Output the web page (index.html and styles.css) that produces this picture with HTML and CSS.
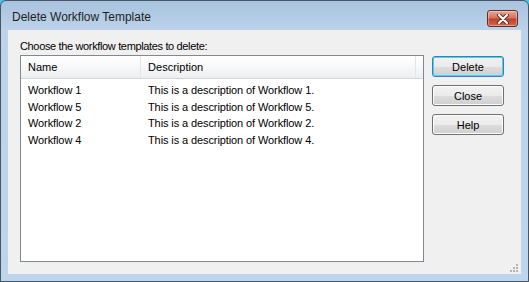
FILE: index.html
```html
<!DOCTYPE html>
<html lang="en">
<head>
    <meta charset="UTF-8">
    <title>Delete Workflow Template</title>
    <link rel="stylesheet" href="styles.css">
</head>
<body>
    <div class="window">
        <div class="titlebar">
            <span class="title">Delete Workflow Template</span>
            <button class="close-x">
                <svg width="16" height="10" viewBox="0 0 16 10">
                    <path d="M4 1 L12 9 M12 1 L4 9" stroke="#5a2a22" stroke-width="4" stroke-linecap="round"/>
                    <path d="M4 1 L12 9 M12 1 L4 9" stroke="#ffffff" stroke-width="2.2" stroke-linecap="round"/>
                </svg>
            </button>
        </div>
        <div class="client">
            <div class="prompt">Choose the workflow templates to delete:</div>
            <div class="content">
                <div class="listview">
                    <div class="header">
                        <div class="col col-name">Name</div>
                        <div class="col col-desc">Description</div>
                        <div class="col col-rest"></div>
                    </div>
                    <div class="row"><span class="cell-name">Workflow 1</span><span>This is a description of Workflow 1.</span></div>
                    <div class="row"><span class="cell-name">Workflow 5</span><span>This is a description of Workflow 5.</span></div>
                    <div class="row"><span class="cell-name">Workflow 2</span><span>This is a description of Workflow 2.</span></div>
                    <div class="row"><span class="cell-name">Workflow 4</span><span>This is a description of Workflow 4.</span></div>
                </div>
                <div class="buttons">
                    <button class="button default">Delete</button>
                    <button class="button">Close</button>
                    <button class="button">Help</button>
                </div>
            </div>
            <div class="grip">
                <svg width="8" height="8" viewBox="0 0 8 8" fill="#b4b4b4">
                    <rect x="6" y="0" width="2" height="2"/>
                    <rect x="3" y="3" width="2" height="2"/>
                    <rect x="6" y="3" width="2" height="2"/>
                    <rect x="0" y="6" width="2" height="2"/>
                    <rect x="3" y="6" width="2" height="2"/>
                    <rect x="6" y="6" width="2" height="2"/>
                </svg>
            </div>
        </div>
    </div>
</body>
</html>
```

FILE: styles.css
```css
body {
    margin: 0;
    background-color: #3ec8ec;
    font-family: "Liberation Sans", Arial, sans-serif;
    font-size: 11px;
    color: #000;
}
.window {
    width: 527px;
    height: 280px;
    border: 1px solid #4a5564;
    border-radius: 6px 6px 0 0;
    background: linear-gradient(#a9c3de, #bcd3ea 30px, #bfd5eb);
    display: flex;
    flex-direction: column;
}
.titlebar {
    height: 29px;
    display: flex;
    align-items: flex-start;
    justify-content: space-between;
    padding: 0 10px 0 11px;
}
.title {
    font-size: 12px;
    margin-top: 9px;
    color: #1e1e1e;
}
.close-x {
    width: 31px;
    height: 17px;
    margin-top: 9px;
    padding: 0;
    border: 1px solid #6b2a22;
    border-radius: 3px;
    background: linear-gradient(#e8a898, #d5735f 45%, #c0412a 55%, #cf6a4c);
    box-shadow: inset 0 0 0 1px rgba(255,255,255,0.35);
    display: flex;
    align-items: center;
    justify-content: center;
}
.client {
    flex: 1;
    margin: 0 7px 7px 7px;
    background-color: #f0f0f0;
    padding: 10px 17px 0 12px;
    position: relative;
}
.prompt {
    height: 15px;
    letter-spacing: -0.35px;
}
.content {
    display: flex;
    gap: 8px;
}
.listview {
    width: 402px;
    height: 205px;
    border: 1px solid #828790;
    background-color: #fff;
}
.header {
    display: flex;
    height: 22px;
    background: linear-gradient(#ffffff, #f7f8f9 50%, #eceef0);
    border-bottom: 1px solid #d5d5d5;
    margin-bottom: 3px;
}
.col {
    line-height: 22px;
    padding-left: 7px;
    border-right: 1px solid #e3e5e7;
}
.col-name { width: 113px; }
.col-desc { width: 269px; }
.col-rest { flex: 1; border-right: none; }
.row {
    height: 16.5px;
    line-height: 16px;
    padding-left: 7px;
    display: flex;
    letter-spacing: -0.1px;
}
.cell-name {
    width: 120px;
}
.buttons {
    display: flex;
    flex-direction: column;
    gap: 8px;
    padding-top: 1px;
}
.button {
    width: 72px;
    height: 21px;
    padding: 0;
    font-family: "Liberation Sans", Arial, sans-serif;
    font-size: 11px;
    color: #000;
    border: 1px solid #707070;
    border-radius: 3px;
    background: linear-gradient(#f2f2f2, #ebebeb 50%, #dddddd 51%, #cfcfcf);
    box-shadow: inset 0 0 0 1px #fcfcfc;
}
.button.default {
    border-color: #3c7fb1;
    box-shadow: inset 0 0 0 1px #48d1fc;
}
.grip {
    position: absolute;
    right: 3px;
    bottom: 2px;
    line-height: 0;
}
```
